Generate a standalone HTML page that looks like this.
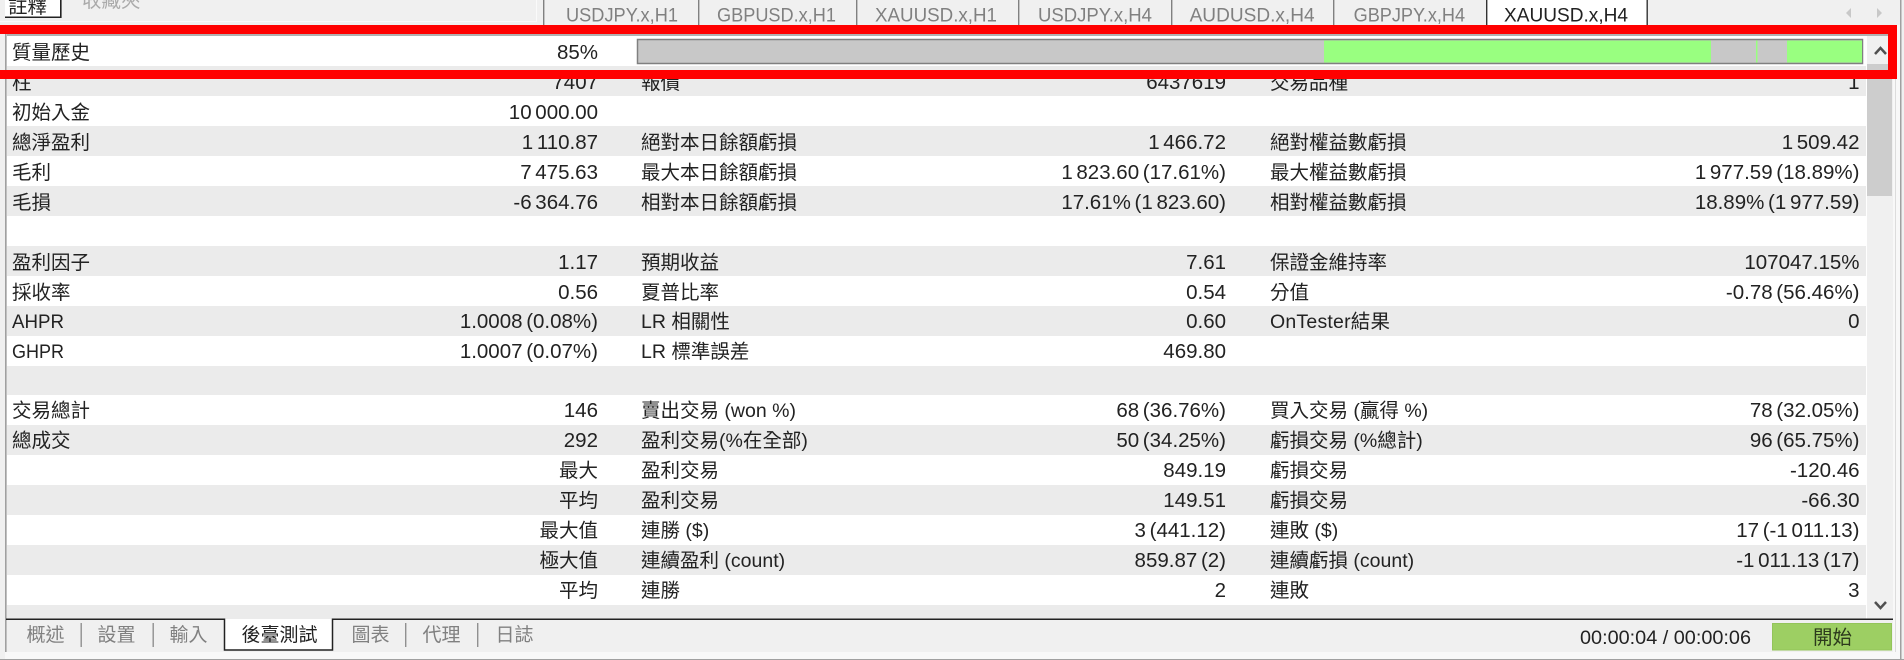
<!DOCTYPE html>
<html><head><meta charset="utf-8"><style>
html,body{margin:0;padding:0;background:#f0f0f0;width:1904px;height:660px;overflow:hidden}
svg{display:block}
text{font-family:"Liberation Sans","Noto Sans CJK TC",sans-serif;font-size:19.5px;fill:#222}
.e{text-anchor:end;font-size:20.5px;word-spacing:-2px}
.c{font-size:19.5px;word-spacing:0}
.t{fill:#808080}
.b{font-size:19px}
</style></head><body>
<svg width="1904" height="660" viewBox="0 0 1904 660" xmlns="http://www.w3.org/2000/svg">
<rect width="1904" height="660" fill="#f0f0f0"/>
<!-- top strip -->
<rect x="0" y="21" width="537" height="1" fill="#fafafa"/>
<rect x="536" y="0" width="1" height="22" fill="#fafafa"/>
<rect x="5" y="0" width="56" height="17" fill="#fff"/>
<rect x="60" y="0" width="1.6" height="18" fill="#222"/>
<rect x="5" y="16.5" width="56" height="1.5" fill="#222"/>
<text x="8" y="13">註釋</text>
<text x="82" y="7" style="fill:#aaa">收藏夾</text>
<g fill="#808080"><rect x="543" y="0" width="1.4" height="25"/><rect x="698" y="0" width="1.4" height="25"/><rect x="856" y="0" width="1.4" height="25"/><rect x="1018" y="0" width="1.4" height="25"/><rect x="1171" y="0" width="1.4" height="25"/><rect x="1333" y="0" width="1.4" height="25"/></g>
<rect x="1487" y="0" width="160" height="25" fill="#fff"/>
<rect x="1486" y="0" width="1.4" height="25" fill="#333"/>
<rect x="1646.5" y="0" width="1.4" height="25" fill="#333"/>
<g>
<text class="t" x="566" y="21.5" textLength="112" lengthAdjust="spacingAndGlyphs">USDJPY.x,H1</text>
<text class="t" x="717" y="21.5" textLength="119" lengthAdjust="spacingAndGlyphs">GBPUSD.x,H1</text>
<text class="t" x="875" y="21.5" textLength="122" lengthAdjust="spacingAndGlyphs">XAUUSD.x,H1</text>
<text class="t" x="1038" y="21.5" textLength="114" lengthAdjust="spacingAndGlyphs">USDJPY.x,H4</text>
<text class="t" x="1189.6" y="21.5" textLength="125" lengthAdjust="spacingAndGlyphs">AUDUSD.x,H4</text>
<text class="t" x="1353.6" y="21.5" textLength="111.5" lengthAdjust="spacingAndGlyphs">GBPJPY.x,H4</text>
<text x="1504" y="21.5" textLength="124" lengthAdjust="spacingAndGlyphs">XAUUSD.x,H4</text>
</g>
<path d="M1851 8v10l-5-5z" fill="#c8c8c8"/><path d="M1877 8v10l5-5z" fill="#c8c8c8"/>
<!-- table bg -->
<rect x="5" y="25" width="1.6" height="627" fill="#a0a0a0"/>
<rect x="7" y="34" width="1886" height="2" fill="#b0b0b0"/>
<rect x="7" y="36" width="1860" height="583" fill="#fff"/>
<g fill="#ebebeb">
<rect x="7" y="66" width="1859" height="30"/>
<rect x="7" y="126" width="1859" height="30"/>
<rect x="7" y="186" width="1859" height="30"/>
<rect x="7" y="246" width="1859" height="30"/>
<rect x="7" y="306" width="1859" height="30"/>
<rect x="7" y="366" width="1859" height="29"/>
<rect x="7" y="425" width="1859" height="30"/>
<rect x="7" y="485" width="1859" height="30"/>
<rect x="7" y="545" width="1859" height="30"/>
<rect x="7" y="605" width="1859" height="14"/>
</g>
<!-- scrollbar -->
<rect x="1867" y="36" width="26" height="583" fill="#f0f0f0"/>
<rect x="1867" y="64" width="25" height="132" fill="#cdcdcd"/>
<path d="M1875 54l5.500-6 5.500 6" fill="none" stroke="#505050" stroke-width="2.500"/>
<path d="M1875 602l5.500 6 5.500-6" fill="none" stroke="#505050" stroke-width="2.500"/>
<rect x="1893" y="25" width="7" height="634" fill="#f8f8f8"/>
<rect x="1895" y="25" width="1" height="634" fill="#dcdcdc"/>
<rect x="1900" y="0" width="1.500" height="660" fill="#a0a0a0"/>
<!-- progress -->
<rect x="637.500" y="39.500" width="1225" height="24" fill="#c8c8c8" stroke="#808080" stroke-width="1.500"/>
<g fill="#99ff80"><rect x="1324" y="40.500" width="387" height="22"/><rect x="1756" y="40.500" width="1.500" height="22"/><rect x="1787" y="40.500" width="75" height="22"/></g>
<!-- rows -->
<text x="12" y="59">質量歷史</text><text class="e" x="598" y="59">85%</text>

<text x="12" y="89">柱</text><text class="e" x="598" y="89">7407</text><text x="641" y="89">報價</text><text class="e" x="1226" y="89">6437619</text><text x="1270" y="89">交易品種</text><text class="e" x="1859.500" y="89">1</text>

<text x="12" y="119">初始入金</text><text class="e" x="598" y="119">10 000.00</text>

<text x="12" y="149">總淨盈利</text><text class="e" x="598" y="149">1 110.87</text><text x="641" y="149">絕對本日餘額虧損</text><text class="e" x="1226" y="149">1 466.72</text><text x="1270" y="149">絕對權益數虧損</text><text class="e" x="1859.500" y="149">1 509.42</text>

<text x="12" y="179">毛利</text><text class="e" x="598" y="179">7 475.63</text><text x="641" y="179">最大本日餘額虧損</text><text class="e" x="1226" y="179">1 823.60 (17.61%)</text><text x="1270" y="179">最大權益數虧損</text><text class="e" x="1859.500" y="179">1 977.59 (18.89%)</text>

<text x="12" y="209">毛損</text><text class="e" x="598" y="209">-6 364.76</text><text x="641" y="209">相對本日餘額虧損</text><text class="e" x="1226" y="209">17.61% (1 823.60)</text><text x="1270" y="209">相對權益數虧損</text><text class="e" x="1859.500" y="209">18.89% (1 977.59)</text>

<text x="12" y="269">盈利因子</text><text class="e" x="598" y="269">1.17</text><text x="641" y="269">預期收益</text><text class="e" x="1226" y="269">7.61</text><text x="1270" y="269">保證金維持率</text><text class="e" x="1859.500" y="269">107047.15%</text>

<text x="12" y="299">採收率</text><text class="e" x="598" y="299">0.56</text><text x="641" y="299">夏普比率</text><text class="e" x="1226" y="299">0.54</text><text x="1270" y="299">分值</text><text class="e" x="1859.500" y="299">-0.78 (56.46%)</text>

<text x="12" y="328" textLength="52" lengthAdjust="spacingAndGlyphs">AHPR</text><text class="e" x="598" y="328">1.0008 (0.08%)</text><text x="641" y="328">LR 相關性</text><text class="e" x="1226" y="328">0.60</text><text x="1270" y="328" textLength="120" lengthAdjust="spacing">OnTester結果</text><text class="e" x="1859.500" y="328">0</text>

<text x="12" y="358" textLength="52" lengthAdjust="spacingAndGlyphs">GHPR</text><text class="e" x="598" y="358">1.0007 (0.07%)</text><text x="641" y="358">LR 標準誤差</text><text class="e" x="1226" y="358">469.80</text>

<text x="12" y="417">交易總計</text><text class="e" x="598" y="417">146</text><text x="641" y="417">賣出交易 (won %)</text><text class="e" x="1226" y="417">68 (36.76%)</text><text x="1270" y="417">買入交易 (贏得 %)</text><text class="e" x="1859.500" y="417">78 (32.05%)</text>

<text x="12" y="447">總成交</text><text class="e" x="598" y="447">292</text><text x="641" y="447">盈利交易(%在全部)</text><text class="e" x="1226" y="447">50 (34.25%)</text><text x="1270" y="447">虧損交易 (%總計)</text><text class="e" x="1859.500" y="447">96 (65.75%)</text>

<text class="e c" x="598" y="477">最大</text><text x="641" y="477">盈利交易</text><text class="e" x="1226" y="477">849.19</text><text x="1270" y="477">虧損交易</text><text class="e" x="1859.500" y="477">-120.46</text>

<text class="e c" x="598" y="507">平均</text><text x="641" y="507">盈利交易</text><text class="e" x="1226" y="507">149.51</text><text x="1270" y="507">虧損交易</text><text class="e" x="1859.500" y="507">-66.30</text>

<text class="e c" x="598" y="537">最大值</text><text x="641" y="537">連勝 ($)</text><text class="e" x="1226" y="537">3 (441.12)</text><text x="1270" y="537">連敗 ($)</text><text class="e" x="1859.500" y="537">17 (-1 011.13)</text>

<text class="e c" x="598" y="567">極大值</text><text x="641" y="567">連續盈利 (count)</text><text class="e" x="1226" y="567">859.87 (2)</text><text x="1270" y="567">連續虧損 (count)</text><text class="e" x="1859.500" y="567">-1 011.13 (17)</text>

<text class="e c" x="598" y="597">平均</text><text x="641" y="597">連勝</text><text class="e" x="1226" y="597">2</text><text x="1270" y="597">連敗</text><text class="e" x="1859.500" y="597">3</text>

<!-- bottom bar -->
<rect x="7" y="620" width="1886" height="32" fill="#f0f0f0"/>
<rect x="5" y="652" width="1895" height="7" fill="#f8f8f8"/>
<rect x="0" y="659" width="1904" height="1.500" fill="#a0a0a0"/>
<rect x="224.500" y="619" width="108" height="31" fill="#fff"/>
<path d="M6 619.200H224.500V650H332.500V619.200H1893" fill="none" stroke="#222" stroke-width="1.500"/>
<g fill="#909090"><rect x="80.500" y="623" width="1.400" height="24"/><rect x="152.500" y="623" width="1.400" height="24"/><rect x="405" y="623" width="1.400" height="24"/><rect x="477" y="623" width="1.400" height="24"/></g>
<text class="t b" x="26.500" y="641">概述</text>
<text class="t b" x="97.500" y="641">設置</text>
<text class="t b" x="169.500" y="641">輸入</text>
<text class="b" x="241.500" y="641">後臺測試</text>
<text class="t b" x="351.500" y="641">圖表</text>
<text class="t b" x="422.500" y="641">代理</text>
<text class="t b" x="495.500" y="641">日誌</text>
<text x="1580" y="644" textLength="171" lengthAdjust="spacingAndGlyphs">00:00:04 / 00:00:06</text>
<rect x="1772.500" y="623.500" width="119" height="26.500" fill="#9dcf63" stroke="#93c45a"/>
<text x="1813" y="644" style="fill:#2c3a1c">開始</text>
<!-- red annotation -->
<rect x="-10" y="29.500" width="1902.500" height="45" fill="none" stroke="#ff0000" stroke-width="9"/>
</svg>
</body></html>
